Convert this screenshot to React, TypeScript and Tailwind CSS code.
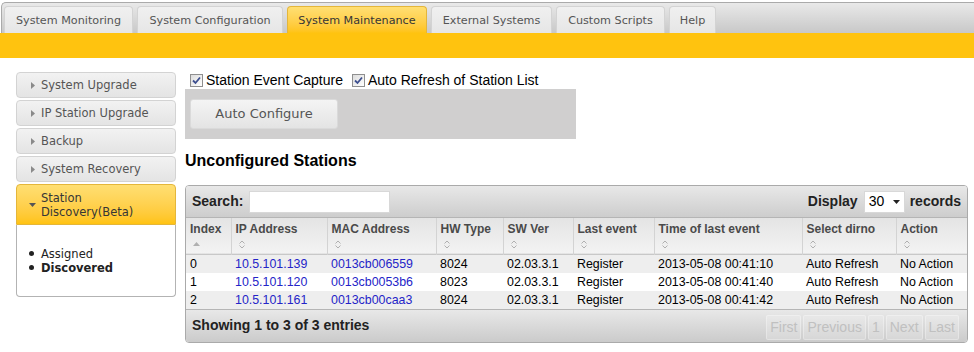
const tabs = [
  { label: "System Monitoring", w: "w-[129px]" },
  { label: "System Configuration", w: "w-[146px]" },
  { label: "System Maintenance", w: "w-[140px]", active: true },
  { label: "External Systems", w: "w-[121px]" },
  { label: "Custom Scripts", w: "w-[109px]" },
  { label: "Help", w: "w-[47px]" },
];

const menu = ["System Upgrade", "IP Station Upgrade", "Backup", "System Recovery"];

const cols = [
  { label: "Index", w: "w-[45px]", asc: true },
  { label: "IP Address", w: "w-[96px]" },
  { label: "MAC Address", w: "w-[109px]" },
  { label: "HW Type", w: "w-[67px]" },
  { label: "SW Ver", w: "w-[70px]" },
  { label: "Last event", w: "w-[81px]" },
  { label: "Time of last event", w: "w-[148px]" },
  { label: "Select dirno", w: "w-[94px]" },
  { label: "Action", w: "w-[71px]" },
];

const rows = [
  ["0", "10.5.101.139", "0013cb006559", "8024", "02.03.3.1", "Register", "2013-05-08 00:41:10", "Auto Refresh", "No Action"],
  ["1", "10.5.101.120", "0013cb0053b6", "8023", "02.03.3.1", "Register", "2013-05-08 00:41:40", "Auto Refresh", "No Action"],
  ["2", "10.5.101.161", "0013cb00caa3", "8024", "02.03.3.1", "Register", "2013-05-08 00:41:42", "Auto Refresh", "No Action"],
];

function Check() {
  return (
    <span className="w-[13px] h-[13px] border border-[#8f8f8f] bg-gradient-to-br from-[#dcdcdc] to-white flex items-center justify-center">
      <svg width="9" height="9" viewBox="0 0 9 9">
        <path d="M1 4.5 L3.5 7 L8 1.5" fill="none" stroke="#3d4f8f" strokeWidth="1.8" />
      </svg>
    </span>
  );
}

function SortIcon({ asc }: { asc?: boolean }) {
  if (asc)
    return (
      <svg width="7" height="4" viewBox="0 0 7 4" className="ml-[7px]">
        <path d="M0 4 L3.5 0 L7 4 Z" fill="#b0b0b0" />
      </svg>
    );
  return (
    <svg width="6" height="9" viewBox="0 0 6 9" className="ml-[7px]">
      <path d="M0.5 3.5 L3 1 L5.5 3.5 M0.5 5.5 L3 8 L5.5 5.5" fill="none" stroke="#b0b0b0" strokeWidth="1" />
    </svg>
  );
}

export default function App() {
  return (
    <div className="w-[974px] h-[352px] bg-white overflow-hidden font-['DejaVu_Sans',Verdana,sans-serif]">
      <div className="pt-[2px]">
        <div className="ml-[1px] h-[31px] rounded-tl-[5px] border-t border-l border-[#aaaaaa] bg-gradient-to-b from-[#e9e9e9] to-[#c8c8c8] flex items-end gap-[4px] pl-[2px]">
          {tabs.map((t) => (
            <div
              key={t.label}
              className={`${t.w} h-[27px] pt-[2px] rounded-t-[4px] border border-b-0 flex items-center justify-center text-[11.2px] ${
                t.active
                  ? "bg-gradient-to-b from-[#ffdf72] to-[#ffc30f] border-[#e4b63a] text-[#363636]"
                  : "bg-gradient-to-b from-[#f0f0f0] to-[#e6e6e6] border-[#d3d3d3] text-[#555555]"
              }`}
            >
              {t.label}
            </div>
          ))}
        </div>
        <div className="h-[25px] bg-[#ffc30f]" />
      </div>

      <div className="flex mt-[14px]">
        <div className="ml-[16px] w-[160px] flex flex-col gap-[2px]">
          {menu.map((m) => (
            <div
              key={m}
              className="h-[26px] pt-[2px] rounded-[4px] border border-[#d3d3d3] bg-gradient-to-b from-[#f2f2f2] to-[#e4e4e4] flex items-center pl-[14px] text-[11.5px] text-[#555555]"
            >
              <svg width="4" height="7" viewBox="0 0 4 7" className="mr-[6px] -mt-[1px]">
                <path d="M0 0 L4 3.5 L0 7 Z" fill="#8a8a8a" />
              </svg>
              {m}
            </div>
          ))}
          <div>
            <div className="h-[41px] pt-[1px] rounded-t-[4px] border border-[#e4b63a] bg-gradient-to-b from-[#ffdf72] to-[#ffc30f] flex items-center pl-[12px] text-[11.5px] leading-[14px] text-[#363636]">
              <svg width="7" height="4" viewBox="0 0 7 4" className="mr-[5px]">
                <path d="M0 0 L7 0 L3.5 4 Z" fill="#555555" />
              </svg>
              <span>
                Station
                <br />
                Discovery(Beta)
              </span>
            </div>
            <div className="h-[72px] rounded-b-[4px] border border-t-0 border-[#b3b3b3] bg-white flex flex-col justify-center pl-[12px] text-[11.5px] leading-[14px] text-[#222222]">
              <div className="flex items-center">
                <span className="w-[5px] h-[5px] rounded-full bg-[#222222] mr-[7px]" />
                Assigned
              </div>
              <div className="flex items-center font-bold">
                <span className="w-[5px] h-[5px] rounded-full bg-[#222222] mr-[7px]" />
                Discovered
              </div>
            </div>
          </div>
        </div>

        <div className="ml-[9px] w-[783px] font-['Liberation_Sans',Arial,sans-serif]">
          <div className="h-[17px] flex items-center text-[14px] text-black">
            <label className="flex items-center gap-[3px] ml-[5px]">
              <Check />
              Station Event Capture
            </label>
            <label className="flex items-center gap-[3px] ml-[9px]">
              <Check />
              Auto Refresh of Station List
            </label>
          </div>
          <div className="w-[391px] h-[50px] bg-[#d0cfcf] pt-[10px] pl-[5px]">
            <div className="w-[148px] h-[30px] rounded-[3px] border border-[#dadada] bg-gradient-to-b from-[#f4f4f4] to-[#e4e4e4] flex items-center justify-center text-[13px] text-[#555555] font-['DejaVu_Sans',Verdana,sans-serif]">
              Auto Configure
            </div>
          </div>
          <h2 className="mt-[12px] text-[16px] leading-[20px] font-bold text-black">Unconfigured Stations</h2>

          <div className="mt-[14px] w-[783px] rounded-[4px] border border-[#aaaaaa] overflow-hidden">
            <div className="h-[32px] bg-gradient-to-b from-[#e8e8e8] to-[#cdcdcd] flex items-center px-[6px] text-[14px] font-bold text-[#222222] border-b border-[#b5b5b5]">
              <span>Search:</span>
              <span className="ml-[6px] w-[141px] h-[22px] bg-white border border-[#d8d8d8]" />
              <span className="ml-auto">Display</span>
              <span className="ml-[6px] w-[41px] h-[22px] bg-white border border-[#d8d8d8] flex items-center pl-[4px] font-normal text-black">
                30
                <svg width="7" height="4" viewBox="0 0 7 4" className="ml-[9px]">
                  <path d="M0 0 L7 0 L3.5 4 Z" fill="#222222" />
                </svg>
              </span>
              <span className="ml-[5px]">records</span>
            </div>

            <table className="table-fixed border-collapse w-[781px] text-[12.4px]">
              <thead>
                <tr className="bg-gradient-to-b from-[#e4e4e4] to-[#f3f3f3] border-b border-[#c8c8c8]">
                  {cols.map((c, i) => (
                    <th
                      key={c.label}
                      className={`${c.w} h-[36px] p-0 text-left align-top font-bold text-[12px] text-[#4a4a4a] ${
                        i > 0 ? "border-l border-[#d3d3d3]" : ""
                      }`}
                    >
                      <div className="pl-[4px] pt-[4px] leading-[14px]">{c.label}</div>
                      <div className="h-[16px] flex items-center">
                        <SortIcon asc={c.asc} />
                      </div>
                    </th>
                  ))}
                </tr>
              </thead>
              <tbody>
                {rows.map((r, ri) => (
                  <tr key={ri} className={ri % 2 === 0 ? "bg-[#eeeeee]" : "bg-white"}>
                    {r.map((v, ci) => (
                      <td
                        key={ci}
                        className={`h-[18px] p-0 pl-[4px] leading-[18px] whitespace-nowrap ${
                          ci === 1 || ci === 2 ? "text-[#2424c8]" : "text-black"
                        }`}
                      >
                        {v}
                      </td>
                    ))}
                  </tr>
                ))}
              </tbody>
            </table>

            <div className="h-[33px] bg-gradient-to-b from-[#e8e8e8] to-[#cbcbcb] border-t border-[#b5b5b5] flex items-center pl-[6px] pr-[8px] text-[14px]">
              <span className="font-bold text-[#222222]">Showing 1 to 3 of 3 entries</span>
              <div className="ml-auto flex gap-[2px] text-[#c0c0c0] mt-[4px]">
                {["First", "Previous", "1", "Next", "Last"].map((p) => (
                  <span
                    key={p}
                    className="h-[25px] px-[3px] flex items-center rounded-[2px] bg-white/20 border border-white/30"
                  >
                    {p}
                  </span>
                ))}
              </div>
            </div>
          </div>
        </div>
      </div>
    </div>
  );
}
